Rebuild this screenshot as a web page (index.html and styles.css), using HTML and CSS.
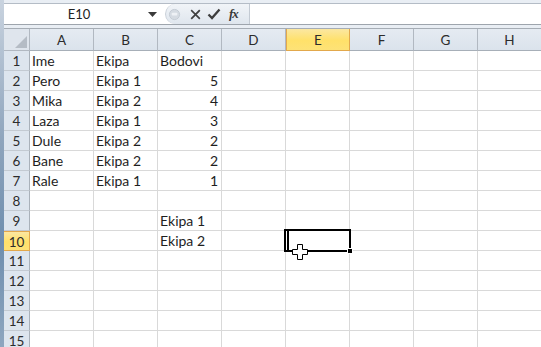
FILE: index.html
```html
<!DOCTYPE html>
<html>
<head>
<meta charset="utf-8">
<link rel="stylesheet" href="styles.css">
</head>
<body>
<div class="app">
  <div class="edge"></div>
  <div class="main">
    <div class="top">
      <div class="fbar">
        <div class="namebox">
          <span class="ref">E10</span>
          <svg class="dd" width="9" height="5" viewBox="0 0 9 5"><path d="M0 0H9L4.5 5Z" fill="#3a3a3a"/></svg>
        </div>
        <div class="fbtns">
          <svg class="ico" width="13" height="13" viewBox="0 0 14 14"><circle cx="7" cy="7" r="5.5" fill="#d5dbe2" stroke="#c3cad3"/><rect x="4" y="5" width="6" height="3" rx="1" fill="#eef1f5"/></svg>
          <svg class="ico x" width="11" height="11" viewBox="0 0 12 12"><path d="M2 2L10 10M10 2L2 10" stroke="#404040" stroke-width="1.9" stroke-linecap="square"/></svg>
          <svg class="ico ck" width="14" height="12" viewBox="0 0 14 12"><path d="M1.5 6.5L5 10L12.5 1.5" fill="none" stroke="#3d3d3d" stroke-width="2.3"/></svg>
          <span class="fx">fx</span>
        </div>
        <div class="finput"></div>
      </div>
      <div class="gap"></div>
    </div>
    <div class="sheet">
      <div class="corner"><svg width="12" height="12" viewBox="0 0 12 12"><path d="M12 0V12H0Z" fill="#b5bcc5"/></svg></div>
      <div class="ch">A</div><div class="ch">B</div><div class="ch">C</div><div class="ch">D</div><div class="ch sel">E</div><div class="ch">F</div><div class="ch">G</div><div class="ch">H</div>

      <div class="rh">1</div><div class="c">Ime</div><div class="c">Ekipa</div><div class="c">Bodovi</div><div class="c"></div><div class="c"></div><div class="c"></div><div class="c"></div><div class="c"></div>
      <div class="rh">2</div><div class="c">Pero</div><div class="c">Ekipa 1</div><div class="c num">5</div><div class="c"></div><div class="c"></div><div class="c"></div><div class="c"></div><div class="c"></div>
      <div class="rh">3</div><div class="c">Mika</div><div class="c">Ekipa 2</div><div class="c num">4</div><div class="c"></div><div class="c"></div><div class="c"></div><div class="c"></div><div class="c"></div>
      <div class="rh">4</div><div class="c">Laza</div><div class="c">Ekipa 1</div><div class="c num">3</div><div class="c"></div><div class="c"></div><div class="c"></div><div class="c"></div><div class="c"></div>
      <div class="rh">5</div><div class="c">Dule</div><div class="c">Ekipa 2</div><div class="c num">2</div><div class="c"></div><div class="c"></div><div class="c"></div><div class="c"></div><div class="c"></div>
      <div class="rh">6</div><div class="c">Bane</div><div class="c">Ekipa 2</div><div class="c num">2</div><div class="c"></div><div class="c"></div><div class="c"></div><div class="c"></div><div class="c"></div>
      <div class="rh">7</div><div class="c">Rale</div><div class="c">Ekipa 1</div><div class="c num">1</div><div class="c"></div><div class="c"></div><div class="c"></div><div class="c"></div><div class="c"></div>
      <div class="rh">8</div><div class="c"></div><div class="c"></div><div class="c"></div><div class="c"></div><div class="c"></div><div class="c"></div><div class="c"></div><div class="c"></div>
      <div class="rh">9</div><div class="c"></div><div class="c"></div><div class="c">Ekipa 1</div><div class="c"></div><div class="c"></div><div class="c"></div><div class="c"></div><div class="c"></div>
      <div class="rh sel">10</div><div class="c"></div><div class="c"></div><div class="c">Ekipa 2</div><div class="c"></div>
      <div class="c active">
        <div class="selbox"><span class="caret"></span><span class="handle"></span></div>
        <svg class="cursor" width="16" height="16" viewBox="0 0 16 16"><path d="M5.5 0.5H10.5V5.5H15.5V10.5H10.5V15.5H5.5V10.5H0.5V5.5H5.5Z" fill="#fff" stroke="#000"/></svg>
      </div>
      <div class="c"></div><div class="c"></div><div class="c"></div>
      <div class="rh">11</div><div class="c"></div><div class="c"></div><div class="c"></div><div class="c"></div><div class="c"></div><div class="c"></div><div class="c"></div><div class="c"></div>
      <div class="rh">12</div><div class="c"></div><div class="c"></div><div class="c"></div><div class="c"></div><div class="c"></div><div class="c"></div><div class="c"></div><div class="c"></div>
      <div class="rh">13</div><div class="c"></div><div class="c"></div><div class="c"></div><div class="c"></div><div class="c"></div><div class="c"></div><div class="c"></div><div class="c"></div>
      <div class="rh">14</div><div class="c"></div><div class="c"></div><div class="c"></div><div class="c"></div><div class="c"></div><div class="c"></div><div class="c"></div><div class="c"></div>
      <div class="rh">15</div><div class="c"></div><div class="c"></div><div class="c"></div><div class="c"></div><div class="c"></div><div class="c"></div><div class="c"></div><div class="c"></div>
    </div>
  </div>
</div>
</body>
</html>
```

FILE: styles.css
```css
* { box-sizing: border-box; }
html, body { margin: 0; padding: 0; background: #fff; }
body { width: 541px; height: 347px; overflow: hidden; font-family: "Lato", "Liberation Sans", sans-serif; color: #1e1e1e; }

.app { display: flex; height: 347px; }
.edge { width: 4px; flex: none; background: linear-gradient(#c9d3df, #8fa5bd 40%, #6e8eae 70%, #8ea6bf); }
.main { flex: 1; overflow: hidden; }

.top { height: 28px; background: #e9eef4; padding-top: 3px; }
.fbar { display: flex; height: 22px; background: #fff; border-top: 1px solid #b4bcc6; border-bottom: 1px solid #9ea5ad; }
.namebox { width: 160px; display: flex; align-items: center; }
.ref { flex: 1; text-align: center; font-family: "Lato", sans-serif; font-size: 13px; color: #222; padding-left: 6px; }
.dd { margin: 0 7px 0 0; }
.fbtns { width: 85px; margin-left: 1px; display: flex; align-items: center; background: linear-gradient(#f1f4f8, #dfe6ee); border-radius: 10px 0 0 10px; border-left: 1px solid #c9d0d8; border-right: 1px solid #c3cad3; padding-left: 2px; }
.ico { flex: none; }
.ico.x { margin-left: 9px; }
.ico.ck { margin-left: 6px; }
.fx { margin-left: 8px; font-family: "Liberation Serif", serif; font-style: italic; font-weight: bold; font-size: 13px; color: #3a3a3a; letter-spacing: -1px; }
.finput { flex: 1; }
.gap { height: 2px; }

.sheet { display: grid; grid-template-columns: 26px repeat(8, 64px); grid-template-rows: 22px; grid-auto-rows: 20px; border-top: 1px solid #a6adb5; }
.corner { background: #dfe5ed; border-right: 1px solid #b1b8c1; border-bottom: 1px solid #b1b8c1; display: flex; align-items: flex-end; justify-content: flex-end; padding: 0 2px 2px 0; }
.ch { background: linear-gradient(#e5ebf2, #dbe3ec); border-right: 1px solid #b1b8c1; border-bottom: 1px solid #a7afb8; display: flex; align-items: center; justify-content: center; font-size: 13.5px; color: #2c2c2c; padding-top: 1px; }
.ch.sel { background: linear-gradient(#fbe7a2, #ffe16a 55%, #fde277); border: 1px solid #e2a84c; border-top: none; }
.rh { background: #dde5ee; border-right: 1px solid #a9b1ba; border-bottom: 1px solid #c3cad2; display: flex; align-items: center; justify-content: center; font-size: 13.5px; color: #2c2c2c; padding-top: 1px; }
.rh.sel { background: linear-gradient(#fbe7a2, #ffe16a 55%, #fde277); border: 1px solid #e2a84c; border-left: none; }
.c { border-right: 1px solid #d9d9d9; border-bottom: 1px solid #d9d9d9; display: flex; align-items: flex-end; padding: 0 3px 1px 2px; font-size: 14px; line-height: 17px; white-space: nowrap; }
.c.num { justify-content: flex-end; }
.c.active { position: relative; overflow: visible; }
.selbox { position: absolute; left: -2px; top: -2px; right: -2px; bottom: -2px; border: 2px solid #000; }
.caret { position: absolute; left: 1px; top: 0; bottom: 0; width: 2px; background: #000; }
.handle { position: absolute; right: -4px; bottom: -4px; width: 6px; height: 6px; background: #000; border: 1px solid #fff; }
.cursor { position: absolute; left: 6px; top: 13px; }
```
